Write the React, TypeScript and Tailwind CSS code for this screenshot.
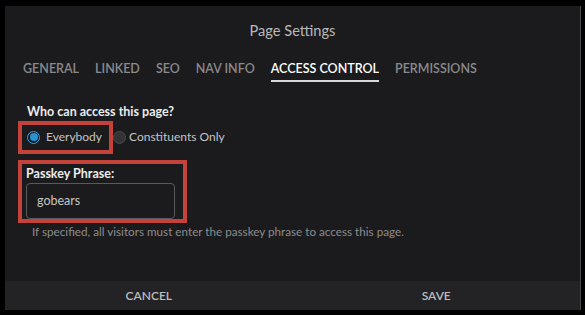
import React, { useState } from 'react';

const tabs = ['General', 'Linked', 'SEO', 'Nav Info', 'Access Control', 'Permissions'];

const Radio: React.FC<{ checked: boolean; label: string; gap: string; onClick: () => void }> = ({ checked, label, gap, onClick }) => (
  <button onClick={onClick} className={`flex items-center text-[12px] text-[#c4c4c4] ${gap}`}>
    {checked ? (
      <span className="w-[13px] h-[13px] rounded-full border border-[#3aa0dc] p-[1.5px] flex">
        <span className="flex-1 rounded-full bg-[#2a93d3]" />
      </span>
    ) : (
      <span className="w-[13px] h-[13px] rounded-full border border-[#4a4a4c] bg-[#333335]" />
    )}
    {label}
  </button>
);

const App: React.FC = () => {
  const [access, setAccess] = useState<'all' | 'constituents'>('all');
  const [phrase, setPhrase] = useState('gobears');

  return (
    <div className="w-[585px] h-[315px] bg-black pt-[6px] pl-[5px]" style={{ fontFamily: 'Lato, "Open Sans", sans-serif' }}>
      <div className="w-[576px] h-[304px] bg-[#1b1b1d] border-r border-[#4a4a4c] flex flex-col">
        <div className="h-[50px] flex items-center justify-center text-[14.6px] text-[#b9b9bb]">Page Settings</div>

        <div className="flex gap-4 px-[18px] mt-[4px] h-[22px]">
          {tabs.map(t => {
            const active = t === 'Access Control';
            return (
              <div key={t} className={`uppercase text-[12.5px] font-semibold h-full border-b-2 ${active ? 'text-white border-[#d8d8d8]' : 'text-[#8a8a8c] border-transparent'}`}>
                {t}
              </div>
            );
          })}
        </div>

        <div className="px-[13px] pt-[24px] flex-1">
          <div className="pl-[9px] text-[12.5px] font-bold text-[#ececec] leading-none">Who can access this page?</div>

          <div className="flex items-center mt-[2px]">
            <div className="border-4 border-[#c4423a] h-[33px] pl-[5px] pr-[7px] flex items-center">
              <Radio checked={access === 'all'} label="Everybody" gap="gap-[6px]" onClick={() => setAccess('all')} />
            </div>
            <Radio checked={access === 'constituents'} label="Constituents Only" gap="gap-[3px]" onClick={() => setAccess('constituents')} />
          </div>

          <div className="border-4 border-[#c4423a] w-[169px] mt-[6px] px-[4px] pt-[2px]">
            <div className="text-[12.5px] font-bold text-[#ececec] leading-[15px]">Passkey Phrase:</div>
            <input
              value={phrase}
              onChange={e => setPhrase(e.target.value)}
              className="mt-[2px] w-[149px] h-[36px] rounded-[4px] border border-[#5a5a5c] bg-[#1b1b1d] px-[10px] text-[12.5px] text-[#c4c4c4] outline-none"
            />
          </div>

          <div className="pl-[14px] text-[11.7px] text-[#8c8c8e]">
            If specified, all visitors must enter the passkey phrase to access this page.
          </div>
        </div>

        <div className="h-[29px] bg-[#232326] flex text-[12px] font-semibold text-[#bdbdbf]">
          <button className="flex-1">CANCEL</button>
          <button className="flex-1">SAVE</button>
        </div>
      </div>
    </div>
  );
};

export default App;
